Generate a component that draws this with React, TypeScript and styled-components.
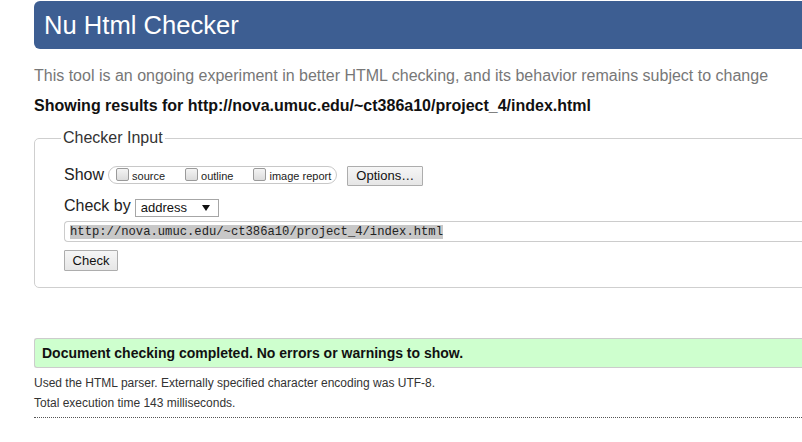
import React from "react";
import styled, { createGlobalStyle } from "styled-components";

const GlobalStyle = createGlobalStyle`
  html, body {
    margin: 0;
    padding: 0;
    background: #ffffff;
    overflow: hidden;
  }
  body {
    font-family: "Liberation Sans", Arial, sans-serif;
    color: #222;
  }
`;

const Page = styled.div`
  width: 840px;
  padding: 1px 0 0 34px;
`;

const Header = styled.header`
  height: 48px;
  background: #3d5e92;
  border-radius: 6px;
  padding-left: 10px;
  display: flex;
  align-items: center;
`;

const Title = styled.h1`
  margin: 0;
  font-size: 25.6px;
  font-weight: normal;
  line-height: 46px;
  color: #ffffff;
`;

const Intro = styled.p`
  margin: 17px 0 0;
  font-size: 16px;
  line-height: 20px;
  color: #777;
`;

const Results = styled.p`
  margin: 10px 0 0;
  font-size: 16px;
  line-height: 20px;
  font-weight: bold;
  color: #111;
`;

const Fieldset = styled.fieldset`
  margin: 12px 0 0;
  min-width: 0;
  padding: 0 0 16px 29px;
  border: 1px solid #cfcfcf;
  border-radius: 5px;
`;

const Legend = styled.legend`
  margin-left: -3px;
  padding: 0 2px;
  font-size: 16px;
  line-height: 20px;
  color: #333;
`;

const Row = styled.div<{ $top: number }>`
  display: flex;
  align-items: flex-start;
  height: 21px;
  margin-top: ${(p) => p.$top}px;
`;

const Label = styled.span`
  font-size: 16px;
  line-height: 20px;
  color: #222;
  margin-right: 4px;
`;

const Pill = styled.div`
  display: flex;
  align-items: center;
  gap: 20px;
  height: 16px;
  margin-top: 1px;
  padding: 0 5px 0 7px;
  border: 1px solid #c8c8c8;
  border-radius: 9px;
`;

const Item = styled.label`
  display: flex;
  align-items: center;
`;

const Box = styled.span`
  box-sizing: border-box;
  width: 13px;
  height: 13px;
  margin: -1px 3px 0 0;
  border: 1px solid #9a9a9a;
  border-radius: 2px;
  background: linear-gradient(#f4f4f4, #dcdcdc);
`;

const ItemText = styled.span`
  font-size: 11px;
  line-height: 11px;
  margin-top: 3px;
  color: #222;
`;

const Button = styled.button<{ $width: number; $top: number }>`
  box-sizing: border-box;
  width: ${(p) => p.$width}px;
  height: 20px;
  margin: ${(p) => p.$top}px 0 0 0;
  padding: 0;
  border: 1px solid #adadad;
  border-radius: 1px;
  background: linear-gradient(#f6f6f6, #e6e6e6);
  font-family: "Liberation Sans", Arial, sans-serif;
  font-size: 13px;
  color: #111;
  line-height: 18px;
`;

const Options = styled(Button)`
  margin-left: 10px;
`;

const Select = styled.div`
  box-sizing: border-box;
  width: 84px;
  height: 18px;
  margin-top: 3px;
  padding: 0 0 0 5px;
  border: 1px solid #a6a6a6;
  display: flex;
  align-items: center;
  justify-content: space-between;
  font-size: 13px;
  line-height: 16px;
  color: #111;
`;

const Arrow = styled.svg`
  width: 8px;
  height: 6px;
  margin-right: 8px;
`;

const UrlField = styled.div`
  box-sizing: border-box;
  height: 21px;
  margin-top: 4px;
  padding-left: 5px;
  border: 1px solid #cccccc;
  border-right: none;
  border-radius: 4px 0 0 4px;
  display: flex;
  align-items: center;
`;

const Selected = styled.span`
  font-family: "Liberation Mono", "DejaVu Sans Mono", monospace;
  font-size: 12.2px;
  line-height: 14px;
  background: #c8c8c8;
  color: #222;
`;

const CheckButton = styled(Button)`
  height: 21px;
  display: block;
`;

const Success = styled.div`
  margin-top: 50px;
  height: 28px;
  padding-left: 7px;
  border: 1px solid #cccccc;
  border-right: none;
  border-radius: 3px 0 0 3px;
  background: #ceffce;
  font-size: 14px;
  font-weight: bold;
  line-height: 28px;
  color: #111;
`;

const Details = styled.p<{ $top: number }>`
  margin: ${(p) => p.$top}px 0 0;
  font-size: 12px;
  line-height: 20px;
  color: #333;
`;

const Rule = styled.hr`
  margin: 4px 0 0;
  border: none;
  border-top: 1px dotted #555;
`;

const url = "http://nova.umuc.edu/~ct386a10/project_4/index.html";
const showOptions = ["source", "outline", "image report"];

export default function App() {
  return (
    <>
      <GlobalStyle />
      <Page>
        <Header>
          <Title>Nu Html Checker</Title>
        </Header>
        <Intro>
          This tool is an ongoing experiment in better HTML checking, and its behavior remains subject to change
        </Intro>
        <Results>Showing results for {url}</Results>
        <Fieldset>
          <Legend>Checker Input</Legend>
          <Row $top={17}>
            <Label>Show</Label>
            <Pill>
              {showOptions.map((o) => (
                <Item key={o}>
                  <Box />
                  <ItemText>{o}</ItemText>
                </Item>
              ))}
            </Pill>
            <Options $width={76} $top={1}>
              Options…
            </Options>
          </Row>
          <Row $top={10}>
            <Label>Check by</Label>
            <Select>
              address
              <Arrow viewBox="0 0 8 6">
                <path d="M0 0 L8 0 L4 6 Z" fill="#111" />
              </Arrow>
            </Select>
          </Row>
          <UrlField>
            <Selected>{url}</Selected>
          </UrlField>
          <CheckButton $width={54} $top={8}>
            Check
          </CheckButton>
        </Fieldset>
        <Success>Document checking completed. No errors or warnings to show.</Success>
        <Details $top={5}>Used the HTML parser. Externally specified character encoding was UTF-8.</Details>
        <Details $top={0}>Total execution time 143 milliseconds.</Details>
        <Rule />
      </Page>
    </>
  );
}
